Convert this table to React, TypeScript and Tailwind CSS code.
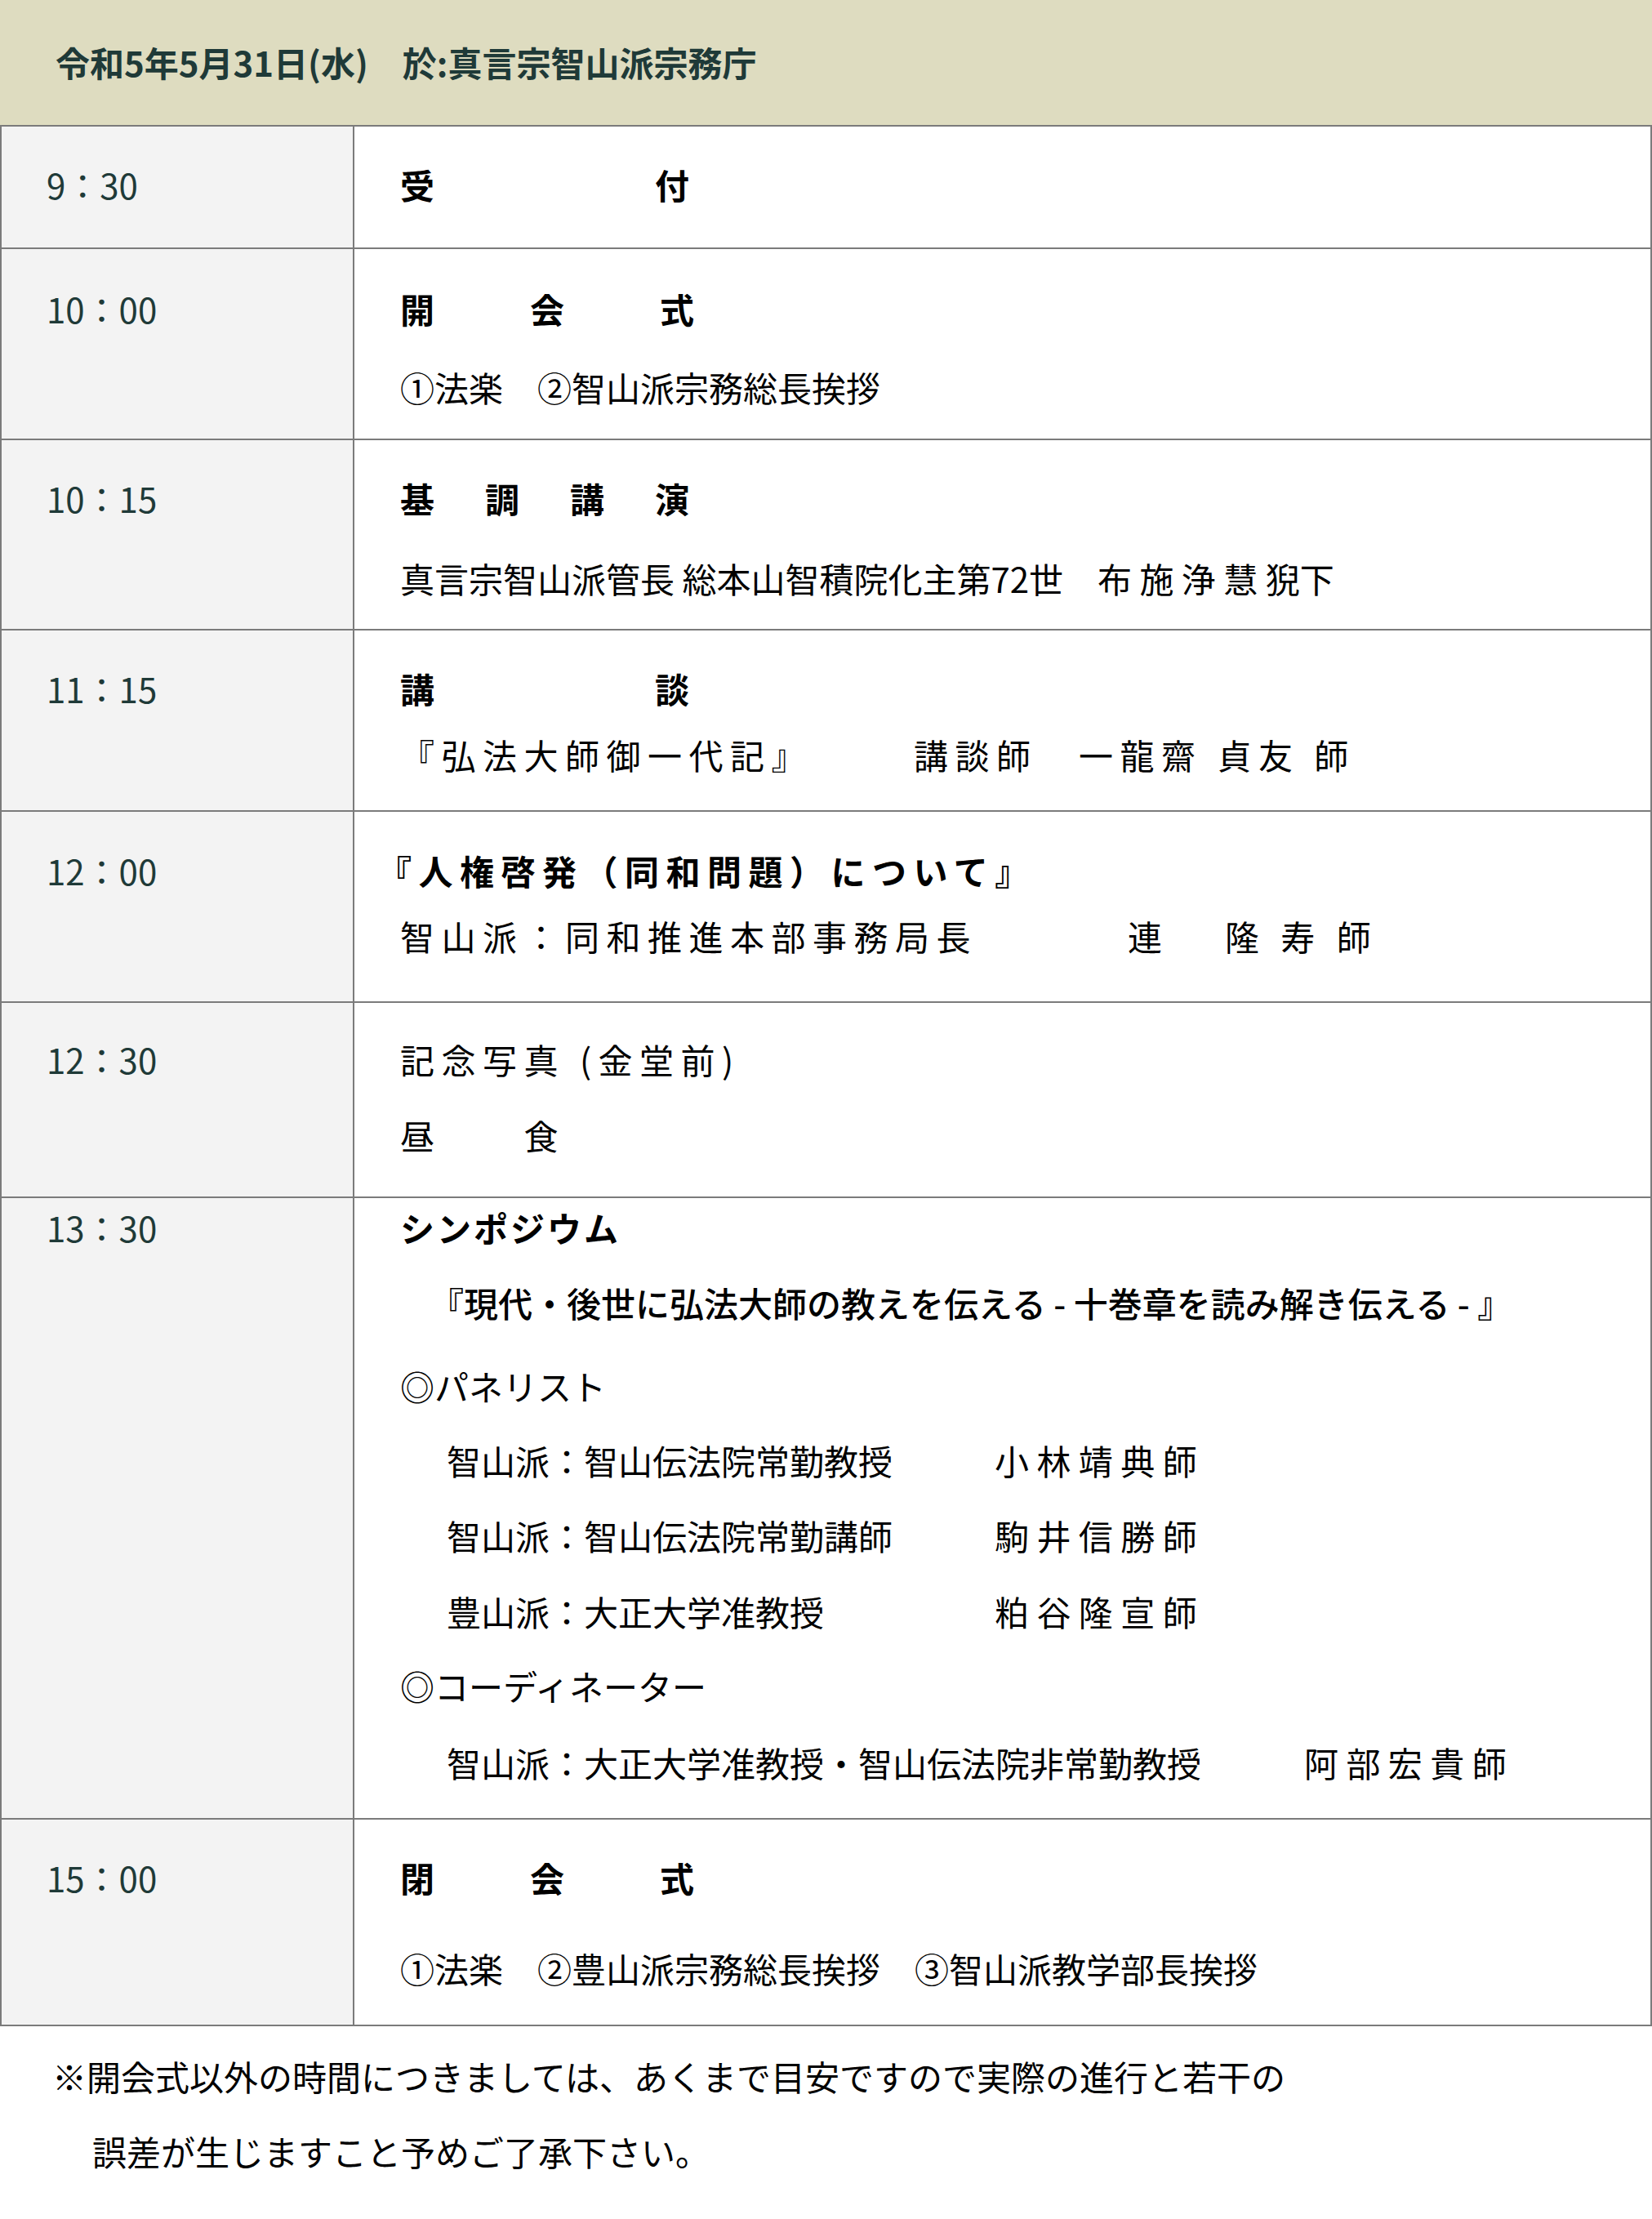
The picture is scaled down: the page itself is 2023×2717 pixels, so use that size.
import React from 'react';

const FONT = '[font-family:"Noto_Sans_CJK_JP","Noto_Sans",sans-serif]';

function Row({
  time,
  rowClass,
  padClass,
  children,
}: {
  time: string;
  rowClass: string;
  padClass: string;
  children: React.ReactNode;
}) {
  return (
    <div className={`flex border-t-2 border-[#7b7b7b] ${rowClass}`}>
      <div className={`w-[432px] shrink-0 bg-[#f3f3f3] border-r-2 border-[#7b7b7b] pl-[55px] ${padClass}`}>
        <div className="leading-[56px] text-[#1f3a38]">{time}</div>
      </div>
      <div className={`flex-1 flex flex-col pl-[56px] ${padClass}`}>{children}</div>
    </div>
  );
}

function Line({ className = '', children }: { className?: string; children: React.ReactNode }) {
  return <div className={`leading-[56px] whitespace-pre flex ${className}`}>{children}</div>;
}

export default function App() {
  return (
    <div className={`w-full h-[2717px] bg-white text-black text-[42px] ${FONT}`}>
      <div className="h-[153px] bg-[#dedcc0] flex items-center pl-[68px] pb-[2px]">
        <span className="font-bold text-[#1f3a38]">令和5年5月31日(水)　於:真言宗智山派宗務庁</span>
      </div>

      <div className="border-l-2 border-r-2 border-b-2 border-[#7b7b7b]">
        <Row time="9：30" rowClass="h-[150px]" padClass="pt-[43px]">
          <Line className="font-bold tracking-[10px]">受　　　　　付</Line>
        </Row>

        <Row time="10：00" rowClass="h-[234px]" padClass="pt-[45px]">
          <Line className="font-bold tracking-[11px]">開　　会　　式</Line>
          <Line className="mt-[40px]">①法楽　②智山派宗務総長挨拶</Line>
        </Row>

        <Row time="10：15" rowClass="h-[233px]" padClass="pt-[43px]">
          <Line className="font-bold tracking-[10px]">基　調　講　演</Line>
          <Line className="mt-[42px]">真言宗智山派管長 総本山智積院化主第72世　布 施 浄 慧 猊下</Line>
        </Row>

        <Row time="11：15" rowClass="h-[222px]" padClass="pt-[43px]">
          <Line className="font-bold tracking-[10px]">講　　　　　談</Line>
          <Line className="mt-[25px] tracking-[8.5px]">
            <span className="w-[629px] shrink-0">『弘法大師御一代記』</span>
            <span>講談師　一龍齋 貞友 師</span>
          </Line>
        </Row>

        <Row time="12：00" rowClass="h-[234px]" padClass="pt-[44px]">
          <Line className="font-bold tracking-[8.5px] -ml-[28px]">『人権啓発（同和問題）について』</Line>
          <Line className="mt-[24px] tracking-[8.5px]">
            <span className="w-[891px] shrink-0">智山派：同和推進本部事務局長</span>
            <span>連　 隆 寿 師</span>
          </Line>
        </Row>

        <Row time="12：30" rowClass="h-[239px]" padClass="pt-[41px]">
          <Line className="tracking-[8.5px]">記念写真 (金堂前)</Line>
          <Line className="mt-[37px] tracking-[8.5px]">昼　　食</Line>
        </Row>

        <Row time="13：30" rowClass="h-[761px]" padClass="pt-[8px]">
          <Line className="font-bold tracking-[3px]">シンポジウム</Line>
          <Line className="mt-[36px] ml-[36px] font-medium">『現代・後世に弘法大師の教えを伝える - 十巻章を読み解き伝える - 』</Line>
          <Line className="mt-[46px]">◎パネリスト</Line>
          <Line className="mt-[35px] ml-[57px]">
            <span className="w-[671px] shrink-0">智山派：智山伝法院常勤教授</span>
            <span>小 林 靖 典 師</span>
          </Line>
          <Line className="mt-[36px] ml-[57px]">
            <span className="w-[671px] shrink-0">智山派：智山伝法院常勤講師</span>
            <span>駒 井 信 勝 師</span>
          </Line>
          <Line className="mt-[37px] ml-[57px]">
            <span className="w-[671px] shrink-0">豊山派：大正大学准教授</span>
            <span>粕 谷 隆 宣 師</span>
          </Line>
          <Line className="mt-[35px]">◎コーディネーター</Line>
          <Line className="mt-[38px] ml-[57px]">
            <span className="w-[1050px] shrink-0">智山派：大正大学准教授・智山伝法院非常勤教授</span>
            <span>阿 部 宏 貴 師</span>
          </Line>
        </Row>

        <Row time="15：00" rowClass="h-[253px]" padClass="pt-[43px]">
          <Line className="font-bold tracking-[11px]">閉　　会　　式</Line>
          <Line className="mt-[55px]">①法楽　②豊山派宗務総長挨拶　③智山派教学部長挨拶</Line>
        </Row>
      </div>

      <div className="pt-[33px]">
        <div className="leading-[56px] whitespace-pre pl-[64px]">※開会式以外の時間につきましては、あくまで目安ですので実際の進行と若干の</div>
        <div className="leading-[56px] whitespace-pre pl-[113px] mt-[36px]">誤差が生じますこと予めご了承下さい。</div>
      </div>
    </div>
  );
}
